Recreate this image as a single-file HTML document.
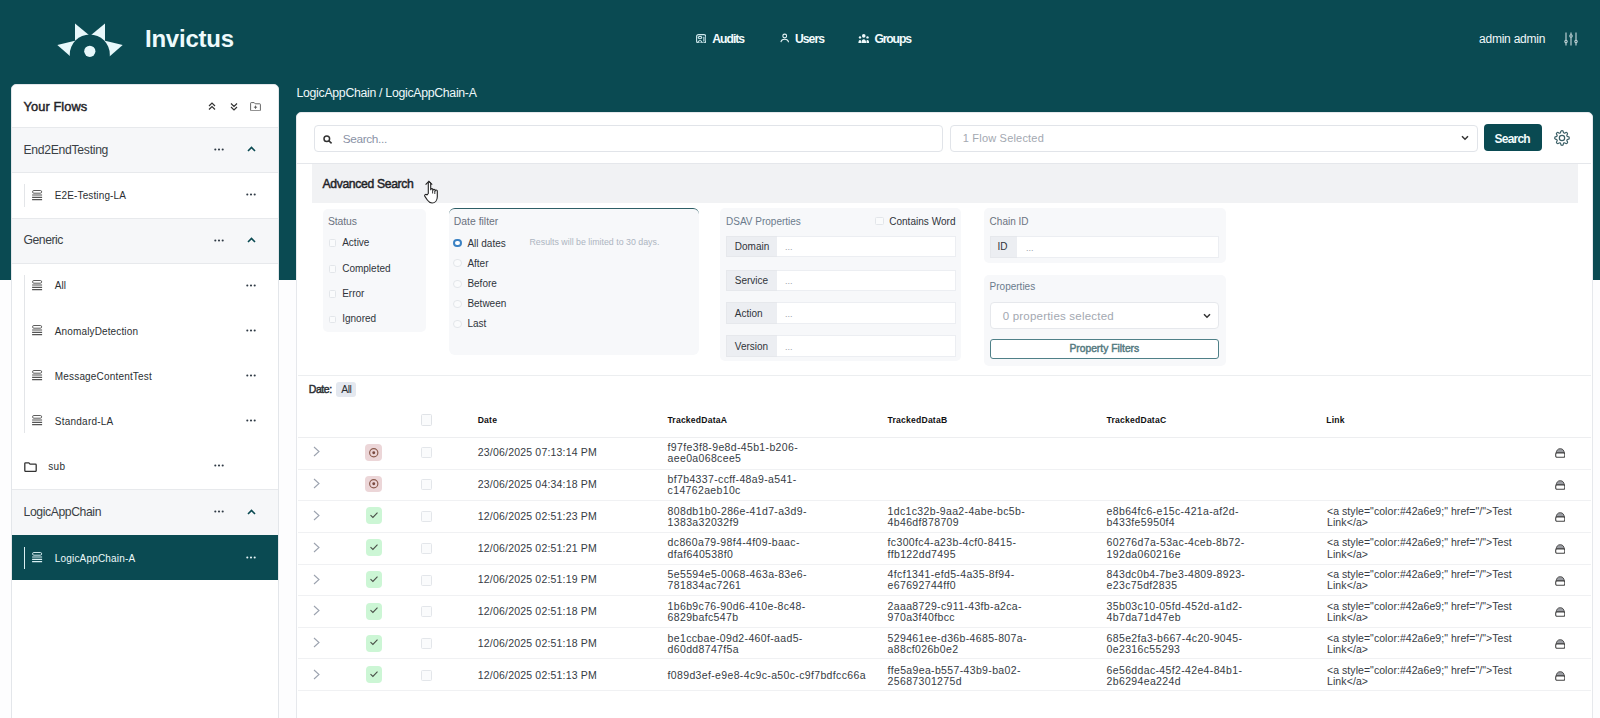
<!DOCTYPE html>
<html><head><meta charset="utf-8"><title>Invictus</title>
<style>
html,body{margin:0;padding:0;}
body{width:1600px;height:718px;overflow:hidden;position:relative;background:#fdfdfe;font-family:"Liberation Sans",sans-serif;}
.t{position:absolute;white-space:nowrap;}
.r{position:absolute;display:block;}
</style></head><body>
<div class="r" style="left:0.00px;top:0.00px;width:1600.00px;height:280.00px;background:#0a4a52;"></div>
<svg class="r" style="left:55.00px;top:22.00px;" width="70" height="36" viewBox="55 22 70 36"><g fill="#e8f8fb"><polygon points="75,23.5 89.5,35.5 75,44"/><polygon points="105,23.5 90.5,35.5 105,44"/><polygon points="57.3,45 76,40.5 70.5,56.5"/><polygon points="122.7,45 104,40.5 109.5,56.5"/></g><circle cx="89.8" cy="54.5" r="20" fill="#0a4a52"/><circle cx="89.8" cy="51.3" r="5.6" fill="#e8f8fb"/></svg>
<div class="t" style="left:145.00px;top:27.00px;font-size:24px;line-height:24px;color:#eefafc;font-weight:700;letter-spacing:-0.242px;">Invictus</div>
<svg class="r" style="left:695.80px;top:33.60px;" width="10.4" height="9.6" viewBox="0 0 10.4 9.6"><g fill="none" stroke="#cfe9ee" stroke-width="1.1"><rect x="0.6" y="0.6" width="9.2" height="8.4" rx="2"/><ellipse cx="4" cy="3.6" rx="1.8" ry="1.2"/><path d="M1.8 8.8c.4-1.5 1.2-2.3 2.2-2.3s1.8.8 2.2 2.3"/><path d="M7.9 2.8v4.6"/></g></svg>
<div class="t" style="left:712.20px;top:33.40px;font-size:12.2px;line-height:12.2px;color:#f2fbfd;font-weight:700;letter-spacing:-0.990px;">Audits</div>
<svg class="r" style="left:779.50px;top:33.00px;" width="9" height="10" viewBox="0 0 9 10"><g fill="none" stroke="#e8f6f8" stroke-width="1.1"><circle cx="4.7" cy="3" r="1.9"/><path d="M0.9 9.2c.3-2 1.6-3 3.8-3s3.5 1 3.8 3"/></g></svg>
<div class="t" style="left:795.00px;top:33.40px;font-size:12.2px;line-height:12.2px;color:#f2fbfd;font-weight:700;letter-spacing:-0.978px;">Users</div>
<svg class="r" style="left:857.50px;top:33.80px;" width="11.5" height="9.5" viewBox="0 0 11.5 9.5"><g fill="#eef9fb"><circle cx="5.75" cy="1.9" r="1.8"/><circle cx="2" cy="3.4" r="1.2"/><circle cx="9.5" cy="3.4" r="1.2"/><path d="M3.3 9.3c0-2.6 1.1-4 2.45-4s2.45 1.4 2.45 4z"/><path d="M0.4 9.3c0-2 .6-3.2 1.5-3.2s1.1.6 1.1 1.2v2z"/><path d="M11.1 9.3c0-2-.6-3.2-1.5-3.2s-1.1.6-1.1 1.2v2z"/></g></svg>
<div class="t" style="left:874.40px;top:33.40px;font-size:12.2px;line-height:12.2px;color:#f2fbfd;font-weight:700;letter-spacing:-1.156px;">Groups</div>
<div class="t" style="left:1479.00px;top:32.50px;font-size:12px;line-height:12px;color:#f0f8fa;letter-spacing:-0.230px;">admin admin</div>
<svg class="r" style="left:1564.00px;top:32.00px;" width="14" height="14" viewBox="0 0 14 14"><g stroke="#c9d9dc" stroke-width="1.1" fill="none"><path d="M2 0.5v13M7 0.5v13M12 0.5v13"/><circle cx="2" cy="9.5" r="1.2" fill="#0a4a52"/><circle cx="7" cy="4" r="1.2" fill="#0a4a52"/><circle cx="12" cy="9.5" r="1.2" fill="#0a4a52"/></g></svg>
<div class="t" style="left:296.50px;top:87.35px;font-size:12.3px;line-height:12.3px;color:#eef8fa;letter-spacing:-0.300px;">LogicAppChain / LogicAppChain-A</div>
<div class="r" style="left:11.00px;top:84.00px;width:268.00px;height:700.00px;background:#fff;border:1px solid #e3e6ea;border-radius:5px;box-sizing:border-box;"></div>
<div class="t" style="left:23.50px;top:100.60px;font-size:12.8px;line-height:12.8px;color:#1f2328;-webkit-text-stroke:0.45px #1f2328;letter-spacing:0.095px;">Your Flows</div>
<svg class="r" style="left:207.50px;top:101.80px;" width="8" height="8" viewBox="0 0 8 8"><g fill="none" stroke="#333" stroke-width="1.2"><path d="M1 4L4 1L7 4M1 7.5L4 4.5L7 7.5"/></g></svg>
<svg class="r" style="left:230.00px;top:102.60px;" width="8" height="8" viewBox="0 0 8 8"><g fill="none" stroke="#333" stroke-width="1.2"><path d="M1 0.5L4 3.5L7 0.5M1 4L4 7L7 4"/></g></svg>
<svg class="r" style="left:250.20px;top:101.80px;" width="11" height="9" viewBox="0 0 11 9"><g fill="none" stroke="#666" stroke-width="1"><path d="M0.6 1.2a.6.6 0 0 1 .6-.6h3l1 1.2h4.6a.6.6 0 0 1 .6.6v5.8a.6.6 0 0 1-.6.6H1.2a.6.6 0 0 1-.6-.6z"/></g><path d="M5.5 3.6v3.2M3.9 5.2h3.2" stroke="#555" stroke-width="0.9"/></svg>
<div class="r" style="left:12.00px;top:127.00px;width:266.00px;height:1.00px;background:#e5e7eb;"></div>
<div class="r" style="left:12.00px;top:127.00px;width:266.00px;height:45.00px;background:#f6f7f9;"></div>
<div class="r" style="left:12.00px;top:127.00px;width:266.00px;height:1.00px;background:#e7e9ec;"></div>
<div class="r" style="left:12.00px;top:172.00px;width:266.00px;height:1.00px;background:#e7e9ec;"></div>
<div class="t" style="left:23.50px;top:144.40px;font-size:12.2px;line-height:12.2px;color:#3a3f45;letter-spacing:-0.297px;">End2EndTesting</div>
<svg class="r" style="left:214.00px;top:147.70px" width="10" height="3" viewBox="0 0 10 3"><g fill="#2f3a45"><circle cx="1.3" cy="1.5" r="1.05"/><circle cx="5" cy="1.5" r="1.05"/><circle cx="8.7" cy="1.5" r="1.05"/></g></svg>
<svg class="r" style="left:246.50px;top:146.10px" width="9" height="6" viewBox="0 0 9 6"><path d="M1 5L4.5 1.5L8 5" fill="none" stroke="#0a4a52" stroke-width="1.6"/></svg>
<svg class="r" style="left:31.80px;top:189.70px" width="11" height="11" viewBox="0 0 11 11"><g fill="none" stroke="#555"><rect x="0.55" y="0.5" width="9.1" height="2.7" rx="1.35" stroke-width="0.95"/><path d="M0.1 5.0h10M0.1 7.4h10M0.1 9.6h10" stroke-width="1.15"/></g></svg>
<div class="t" style="left:54.80px;top:191.00px;font-size:10px;line-height:10px;color:#2b2f33;letter-spacing:0.125px;">E2E-Testing-LA</div>
<svg class="r" style="left:246.00px;top:193.20px" width="10" height="3" viewBox="0 0 10 3"><g fill="#2f3a45"><circle cx="1.3" cy="1.5" r="1.05"/><circle cx="5" cy="1.5" r="1.05"/><circle cx="8.7" cy="1.5" r="1.05"/></g></svg>
<div class="r" style="left:12.00px;top:218.00px;width:266.00px;height:45.00px;background:#f6f7f9;"></div>
<div class="r" style="left:12.00px;top:218.00px;width:266.00px;height:1.00px;background:#e7e9ec;"></div>
<div class="r" style="left:12.00px;top:263.00px;width:266.00px;height:1.00px;background:#e7e9ec;"></div>
<div class="t" style="left:23.50px;top:234.40px;font-size:12.2px;line-height:12.2px;color:#3a3f45;letter-spacing:-0.453px;">Generic</div>
<svg class="r" style="left:214.00px;top:238.70px" width="10" height="3" viewBox="0 0 10 3"><g fill="#2f3a45"><circle cx="1.3" cy="1.5" r="1.05"/><circle cx="5" cy="1.5" r="1.05"/><circle cx="8.7" cy="1.5" r="1.05"/></g></svg>
<svg class="r" style="left:246.50px;top:237.10px" width="9" height="6" viewBox="0 0 9 6"><path d="M1 5L4.5 1.5L8 5" fill="none" stroke="#0a4a52" stroke-width="1.6"/></svg>
<svg class="r" style="left:31.80px;top:280.20px" width="11" height="11" viewBox="0 0 11 11"><g fill="none" stroke="#555"><rect x="0.55" y="0.5" width="9.1" height="2.7" rx="1.35" stroke-width="0.95"/><path d="M0.1 5.0h10M0.1 7.4h10M0.1 9.6h10" stroke-width="1.15"/></g></svg>
<div class="t" style="left:54.80px;top:281.00px;font-size:10px;line-height:10px;color:#2b2f33;">All</div>
<svg class="r" style="left:246.00px;top:283.70px" width="10" height="3" viewBox="0 0 10 3"><g fill="#2f3a45"><circle cx="1.3" cy="1.5" r="1.05"/><circle cx="5" cy="1.5" r="1.05"/><circle cx="8.7" cy="1.5" r="1.05"/></g></svg>
<svg class="r" style="left:31.80px;top:325.20px" width="11" height="11" viewBox="0 0 11 11"><g fill="none" stroke="#555"><rect x="0.55" y="0.5" width="9.1" height="2.7" rx="1.35" stroke-width="0.95"/><path d="M0.1 5.0h10M0.1 7.4h10M0.1 9.6h10" stroke-width="1.15"/></g></svg>
<div class="t" style="left:54.80px;top:327.00px;font-size:10px;line-height:10px;color:#2b2f33;letter-spacing:0.136px;">AnomalyDetection</div>
<svg class="r" style="left:246.00px;top:328.70px" width="10" height="3" viewBox="0 0 10 3"><g fill="#2f3a45"><circle cx="1.3" cy="1.5" r="1.05"/><circle cx="5" cy="1.5" r="1.05"/><circle cx="8.7" cy="1.5" r="1.05"/></g></svg>
<svg class="r" style="left:31.80px;top:370.20px" width="11" height="11" viewBox="0 0 11 11"><g fill="none" stroke="#555"><rect x="0.55" y="0.5" width="9.1" height="2.7" rx="1.35" stroke-width="0.95"/><path d="M0.1 5.0h10M0.1 7.4h10M0.1 9.6h10" stroke-width="1.15"/></g></svg>
<div class="t" style="left:54.80px;top:372.00px;font-size:10px;line-height:10px;color:#2b2f33;letter-spacing:0.174px;">MessageContentTest</div>
<svg class="r" style="left:246.00px;top:373.70px" width="10" height="3" viewBox="0 0 10 3"><g fill="#2f3a45"><circle cx="1.3" cy="1.5" r="1.05"/><circle cx="5" cy="1.5" r="1.05"/><circle cx="8.7" cy="1.5" r="1.05"/></g></svg>
<svg class="r" style="left:31.80px;top:415.20px" width="11" height="11" viewBox="0 0 11 11"><g fill="none" stroke="#555"><rect x="0.55" y="0.5" width="9.1" height="2.7" rx="1.35" stroke-width="0.95"/><path d="M0.1 5.0h10M0.1 7.4h10M0.1 9.6h10" stroke-width="1.15"/></g></svg>
<div class="t" style="left:54.80px;top:417.00px;font-size:10px;line-height:10px;color:#2b2f33;letter-spacing:0.235px;">Standard-LA</div>
<svg class="r" style="left:246.00px;top:418.70px" width="10" height="3" viewBox="0 0 10 3"><g fill="#2f3a45"><circle cx="1.3" cy="1.5" r="1.05"/><circle cx="5" cy="1.5" r="1.05"/><circle cx="8.7" cy="1.5" r="1.05"/></g></svg>
<svg class="r" style="left:23.5px;top:461.80px" width="13" height="10" viewBox="0 0 13 10"><path d="M0.8 1.6a.8.8 0 0 1 .8-.8h3.2l1.3 1.4h5.3a.8.8 0 0 1 .8.8v5.6a.8.8 0 0 1-.8.8H1.6a.8.8 0 0 1-.8-.8z" fill="none" stroke="#333" stroke-width="1.3"/></svg>
<div class="t" style="left:48.30px;top:462.00px;font-size:10px;line-height:10px;color:#2b2f33;letter-spacing:0.288px;">sub</div>
<svg class="r" style="left:214.00px;top:464.20px" width="10" height="3" viewBox="0 0 10 3"><g fill="#2f3a45"><circle cx="1.3" cy="1.5" r="1.05"/><circle cx="5" cy="1.5" r="1.05"/><circle cx="8.7" cy="1.5" r="1.05"/></g></svg>
<div class="r" style="left:12.00px;top:489.00px;width:266.00px;height:46.00px;background:#f6f7f9;"></div>
<div class="r" style="left:12.00px;top:489.00px;width:266.00px;height:1.00px;background:#e7e9ec;"></div>
<div class="r" style="left:12.00px;top:535.00px;width:266.00px;height:1.00px;background:#e7e9ec;"></div>
<div class="t" style="left:23.50px;top:506.40px;font-size:12.2px;line-height:12.2px;color:#3a3f45;letter-spacing:-0.396px;">LogicAppChain</div>
<svg class="r" style="left:214.00px;top:510.20px" width="10" height="3" viewBox="0 0 10 3"><g fill="#2f3a45"><circle cx="1.3" cy="1.5" r="1.05"/><circle cx="5" cy="1.5" r="1.05"/><circle cx="8.7" cy="1.5" r="1.05"/></g></svg>
<svg class="r" style="left:246.50px;top:508.60px" width="9" height="6" viewBox="0 0 9 6"><path d="M1 5L4.5 1.5L8 5" fill="none" stroke="#0a4a52" stroke-width="1.6"/></svg>
<div class="r" style="left:12.00px;top:535.00px;width:266.00px;height:45.00px;background:#0a4a52;"></div>
<div class="r" style="left:24.00px;top:546.50px;width:1.00px;height:22.50px;background:#d9eef1;"></div>
<svg class="r" style="left:31.80px;top:552.20px" width="11" height="11" viewBox="0 0 11 11"><g fill="none" stroke="#d8eef2"><rect x="0.55" y="0.5" width="9.1" height="2.7" rx="1.35" stroke-width="0.95"/><path d="M0.1 5.0h10M0.1 7.4h10M0.1 9.6h10" stroke-width="1.15"/></g></svg>
<div class="t" style="left:54.80px;top:554.00px;font-size:10px;line-height:10px;color:#eefafc;letter-spacing:0.177px;">LogicAppChain-A</div>
<svg class="r" style="left:246.00px;top:555.70px" width="10" height="3" viewBox="0 0 10 3"><g fill="#e6f4f6"><circle cx="1.3" cy="1.5" r="1.05"/><circle cx="5" cy="1.5" r="1.05"/><circle cx="8.7" cy="1.5" r="1.05"/></g></svg>
<div class="r" style="left:24.00px;top:184.00px;width:1.00px;height:23.00px;background:#e3e5e8;"></div>
<div class="r" style="left:24.00px;top:275.00px;width:1.00px;height:158.00px;background:#e3e5e8;"></div>
<div class="r" style="left:296.00px;top:112.00px;width:1297.00px;height:700.00px;background:#fff;border:1px solid #e6e8ec;border-radius:5px;box-sizing:border-box;"></div>
<div class="r" style="left:314.00px;top:124.50px;width:628.50px;height:27.00px;border:1px solid #e1e4e9;border-radius:4px;box-sizing:border-box;"></div>
<svg class="r" style="left:322.50px;top:134.80px;" width="10" height="9" viewBox="0 0 10 9"><g fill="none" stroke="#333" stroke-width="1.5"><circle cx="3.8" cy="3.8" r="2.8"/><path d="M5.9 5.9L8.6 8.4"/></g></svg>
<div class="t" style="left:342.70px;top:133.60px;font-size:11.8px;line-height:11.8px;color:#8a92a6;letter-spacing:-0.328px;">Search...</div>
<div class="r" style="left:949.50px;top:124.50px;width:528.00px;height:27.00px;border:1px solid #e1e4e9;border-radius:4px;box-sizing:border-box;"></div>
<div class="t" style="left:962.80px;top:133.00px;font-size:11px;line-height:11px;color:#a3a8b1;letter-spacing:0.196px;">1 Flow Selected</div>
<svg class="r" style="left:1460.50px;top:134.80px;" width="8" height="6" viewBox="0 0 8 6"><path d="M1 1.2L4 4.2L7 1.2" fill="none" stroke="#333" stroke-width="1.5"/></svg>
<div class="r" style="left:1484.00px;top:124.20px;width:58.00px;height:27.20px;background:#0a4a52;border-radius:4px;"></div>
<div class="t" style="left:1494.60px;top:132.50px;font-size:12px;line-height:12px;color:#f3fbfc;font-weight:700;letter-spacing:-0.805px;">Search</div>
<svg class="r" style="left:1553.50px;top:130.00px;" width="16" height="16" viewBox="0 0 24 24"><path fill="none" stroke="#3b5f66" stroke-width="1.8" d="M12 16a4 4 0 1 0 0-8 4 4 0 0 0 0 8z"/><path fill="none" stroke="#3b5f66" stroke-width="1.8" d="M19.4 15a1.65 1.65 0 0 0 .33 1.82l.06.06a2 2 0 1 1-2.83 2.83l-.06-.06a1.65 1.65 0 0 0-1.82-.33 1.65 1.65 0 0 0-1 1.51V21a2 2 0 1 1-4 0v-.09A1.65 1.65 0 0 0 9 19.4a1.65 1.65 0 0 0-1.82.33l-.06.06a2 2 0 1 1-2.83-2.83l.06-.06A1.65 1.65 0 0 0 4.68 15a1.65 1.65 0 0 0-1.51-1H3a2 2 0 1 1 0-4h.09A1.65 1.65 0 0 0 4.6 9a1.65 1.65 0 0 0-.33-1.82l-.06-.06a2 2 0 1 1 2.83-2.83l.06.06A1.65 1.65 0 0 0 9 4.68a1.65 1.65 0 0 0 1-1.51V3a2 2 0 1 1 4 0v.09a1.65 1.65 0 0 0 1 1.51 1.65 1.65 0 0 0 1.82-.33l.06-.06a2 2 0 1 1 2.83 2.83l-.06.06A1.65 1.65 0 0 0 19.4 9a1.65 1.65 0 0 0 1.51 1H21a2 2 0 1 1 0 4h-.09a1.65 1.65 0 0 0-1.51 1z"/></svg>
<div class="r" style="left:297.00px;top:162.70px;width:1294.00px;height:1.00px;background:#e5e7eb;"></div>
<div class="r" style="left:312.00px;top:164.00px;width:1266.00px;height:38.50px;background:#f1f2f4;"></div>
<div class="t" style="left:322.50px;top:178.40px;font-size:12.2px;line-height:12.2px;color:#1f2328;-webkit-text-stroke:0.45px #1f2328;letter-spacing:-0.351px;">Advanced Search</div>
<svg class="r" style="left:423.00px;top:180.00px;" width="18" height="25" viewBox="423 180 18 25"><path d="M425.6 184.6L428.9 181.3L432.2 184.6" fill="none" stroke="#222" stroke-width="1.1"/>
<path d="M428.3 193.5V183.6c0-.9.5-1.4 1.2-1.4s1.2.5 1.2 1.4v6.2c0-.8.5-1.2 1.1-1.2s1.1.4 1.1 1.2v.6c0-.7.5-1.1 1.1-1.1s1.1.4 1.1 1.1v.6c0-.7.5-1 1.1-1s1.1.4 1.1 1.1v5.6c0 3.6-2.2 6.3-5.2 6.3-2.2 0-3.4-1-4.6-2.7l-2.6-3.9c-.5-.7-.3-1.4.3-1.8.6-.4 1.3-.2 1.8.4z" fill="#fff" stroke="#222" stroke-width="1.1" stroke-linejoin="round"/>
<path d="M432.6 190.5v3M434.8 191v3" stroke="#222" stroke-width="0.9"/></svg>
<div class="r" style="left:323.30px;top:208.80px;width:102.70px;height:123.00px;background:#f7f8fa;border-radius:5px;"></div>
<div class="t" style="left:328.00px;top:216.80px;font-size:10.4px;line-height:10.4px;color:#6b7280;letter-spacing:-0.117px;">Status</div>
<div class="r" style="left:328.50px;top:239.20px;width:7.50px;height:7.50px;border:1px solid #e3e6ea;border-radius:1.5px;box-sizing:border-box;background:#fafbfc;"></div>
<div class="t" style="left:342.20px;top:238.00px;font-size:10px;line-height:10px;color:#2f343a;">Active</div>
<div class="r" style="left:328.50px;top:265.20px;width:7.50px;height:7.50px;border:1px solid #e3e6ea;border-radius:1.5px;box-sizing:border-box;background:#fafbfc;"></div>
<div class="t" style="left:342.20px;top:264.00px;font-size:10px;line-height:10px;color:#2f343a;">Completed</div>
<div class="r" style="left:328.50px;top:290.40px;width:7.50px;height:7.50px;border:1px solid #e3e6ea;border-radius:1.5px;box-sizing:border-box;background:#fafbfc;"></div>
<div class="t" style="left:342.20px;top:289.00px;font-size:10px;line-height:10px;color:#2f343a;">Error</div>
<div class="r" style="left:328.50px;top:315.90px;width:7.50px;height:7.50px;border:1px solid #e3e6ea;border-radius:1.5px;box-sizing:border-box;background:#fafbfc;"></div>
<div class="t" style="left:342.20px;top:314.00px;font-size:10px;line-height:10px;color:#2f343a;">Ignored</div>
<div class="r" style="left:448.50px;top:208.20px;width:250.00px;height:146.60px;background:#f7f8fa;border-radius:6px;border-top:1px solid #2d5e66;box-sizing:border-box;"></div>
<div class="t" style="left:453.80px;top:216.80px;font-size:10.4px;line-height:10.4px;color:#6b7280;">Date filter</div>
<div class="r" style="left:453.40px;top:239.30px;width:8.20px;height:8.20px;border:2.3px solid #3b82c4;border-radius:50%;box-sizing:border-box;background:#fff;"></div>
<div class="t" style="left:467.40px;top:239.00px;font-size:10px;line-height:10px;color:#2f343a;">All dates</div>
<div class="r" style="left:453.40px;top:259.30px;width:8.20px;height:8.20px;border:1px solid #e3e6ea;border-radius:50%;box-sizing:border-box;background:#fafbfc;"></div>
<div class="t" style="left:467.40px;top:259.00px;font-size:10px;line-height:10px;color:#2f343a;">After</div>
<div class="r" style="left:453.40px;top:279.80px;width:8.20px;height:8.20px;border:1px solid #e3e6ea;border-radius:50%;box-sizing:border-box;background:#fafbfc;"></div>
<div class="t" style="left:467.40px;top:279.00px;font-size:10px;line-height:10px;color:#2f343a;">Before</div>
<div class="r" style="left:453.40px;top:299.50px;width:8.20px;height:8.20px;border:1px solid #e3e6ea;border-radius:50%;box-sizing:border-box;background:#fafbfc;"></div>
<div class="t" style="left:467.40px;top:299.00px;font-size:10px;line-height:10px;color:#2f343a;">Between</div>
<div class="r" style="left:453.40px;top:319.50px;width:8.20px;height:8.20px;border:1px solid #e3e6ea;border-radius:50%;box-sizing:border-box;background:#fafbfc;"></div>
<div class="t" style="left:467.40px;top:319.00px;font-size:10px;line-height:10px;color:#2f343a;">Last</div>
<div class="t" style="left:529.50px;top:238.10px;font-size:8.8px;line-height:8.8px;color:#adb5c1;letter-spacing:0.008px;">Results will be limited to 30 days.</div>
<div class="r" style="left:720.00px;top:208.00px;width:241.00px;height:153.00px;background:#f7f8fa;border-radius:5px;"></div>
<div class="t" style="left:726.00px;top:217.00px;font-size:10px;line-height:10px;color:#6b7b8c;">DSAV Properties</div>
<div class="r" style="left:875.20px;top:216.60px;width:8.60px;height:8.60px;border:1px solid #e3e6ea;border-radius:1.5px;box-sizing:border-box;background:#fafbfc;"></div>
<div class="t" style="left:889.20px;top:217.00px;font-size:10px;line-height:10px;color:#2f343a;letter-spacing:0.029px;">Contains Word</div>
<div class="r" style="left:726.00px;top:235.70px;width:229.50px;height:21.70px;border:1px solid #eceef2;box-sizing:border-box;background:#fff;"></div>
<div class="r" style="left:726.00px;top:235.70px;width:50.70px;height:21.70px;background:#eceef2;border:1px solid #e6e8ec;border-right:none;box-sizing:border-box;"></div>
<div class="t" style="left:734.80px;top:242.00px;font-size:10px;line-height:10px;color:#2f343a;">Domain</div>
<div class="t" style="left:785.00px;top:243.00px;font-size:9px;line-height:9px;color:#9aa0a8;">...</div>
<div class="r" style="left:726.00px;top:269.50px;width:229.50px;height:21.70px;border:1px solid #eceef2;box-sizing:border-box;background:#fff;"></div>
<div class="r" style="left:726.00px;top:269.50px;width:50.70px;height:21.70px;background:#eceef2;border:1px solid #e6e8ec;border-right:none;box-sizing:border-box;"></div>
<div class="t" style="left:734.80px;top:276.00px;font-size:10px;line-height:10px;color:#2f343a;">Service</div>
<div class="t" style="left:785.00px;top:277.00px;font-size:9px;line-height:9px;color:#9aa0a8;">...</div>
<div class="r" style="left:726.00px;top:302.30px;width:229.50px;height:21.70px;border:1px solid #eceef2;box-sizing:border-box;background:#fff;"></div>
<div class="r" style="left:726.00px;top:302.30px;width:50.70px;height:21.70px;background:#eceef2;border:1px solid #e6e8ec;border-right:none;box-sizing:border-box;"></div>
<div class="t" style="left:734.80px;top:309.00px;font-size:10px;line-height:10px;color:#2f343a;">Action</div>
<div class="t" style="left:785.00px;top:310.00px;font-size:9px;line-height:9px;color:#9aa0a8;">...</div>
<div class="r" style="left:726.00px;top:335.40px;width:229.50px;height:21.70px;border:1px solid #eceef2;box-sizing:border-box;background:#fff;"></div>
<div class="r" style="left:726.00px;top:335.40px;width:50.70px;height:21.70px;background:#eceef2;border:1px solid #e6e8ec;border-right:none;box-sizing:border-box;"></div>
<div class="t" style="left:734.80px;top:342.00px;font-size:10px;line-height:10px;color:#2f343a;">Version</div>
<div class="t" style="left:785.00px;top:343.00px;font-size:9px;line-height:9px;color:#9aa0a8;">...</div>
<div class="r" style="left:984.20px;top:208.30px;width:241.50px;height:54.40px;background:#f7f8fa;border-radius:5px;"></div>
<div class="t" style="left:989.60px;top:217.00px;font-size:10px;line-height:10px;color:#6b7280;">Chain ID</div>
<div class="r" style="left:989.60px;top:235.50px;width:229.40px;height:22.00px;border:1px solid #eceef2;box-sizing:border-box;background:#fff;"></div>
<div class="r" style="left:989.60px;top:235.50px;width:27.70px;height:22.00px;background:#eceef2;border:1px solid #e6e8ec;border-right:none;box-sizing:border-box;"></div>
<div class="t" style="left:997.50px;top:242.00px;font-size:10px;line-height:10px;color:#2f343a;">ID</div>
<div class="t" style="left:1026.00px;top:244.00px;font-size:9px;line-height:9px;color:#9aa0a8;">...</div>
<div class="r" style="left:984.20px;top:274.60px;width:241.50px;height:91.00px;background:#f7f8fa;border-radius:5px;"></div>
<div class="t" style="left:989.60px;top:282.00px;font-size:10px;line-height:10px;color:#6b7b8c;">Properties</div>
<div class="r" style="left:989.60px;top:302.30px;width:229.40px;height:27.20px;border:1px solid #e6e8ec;border-radius:4px;box-sizing:border-box;background:#fff;"></div>
<div class="t" style="left:1002.70px;top:310.75px;font-size:11.5px;line-height:11.5px;color:#a3a8b1;letter-spacing:0.212px;">0 properties selected</div>
<svg class="r" style="left:1202.50px;top:313.00px;" width="8" height="6" viewBox="0 0 8 6"><path d="M1 1.2L4 4.2L7 1.2" fill="none" stroke="#333" stroke-width="1.5"/></svg>
<div class="r" style="left:989.60px;top:338.50px;width:229.40px;height:20.80px;border:1px solid #4f8088;border-radius:3px;box-sizing:border-box;background:#fff;"></div>
<div class="t" style="left:1069.40px;top:343.85px;font-size:10.3px;line-height:10.3px;color:#557a7f;-webkit-text-stroke:0.45px #557a7f;">Property Filters</div>
<div class="r" style="left:298.00px;top:375.00px;width:1293.00px;height:1.00px;background:#eceef0;"></div>
<div class="t" style="left:308.75px;top:384.25px;font-size:10.5px;line-height:10.5px;color:#2a2e33;-webkit-text-stroke:0.45px #2a2e33;letter-spacing:-0.424px;">Date:</div>
<div class="r" style="left:335.90px;top:381.70px;width:20.50px;height:15.70px;background:#e4e8ef;border-radius:3px;"></div>
<div class="t" style="left:341.20px;top:384.25px;font-size:10.5px;line-height:10.5px;color:#2a2e33;letter-spacing:-0.485px;">All</div>
<div class="r" style="left:421.00px;top:414.40px;width:11.20px;height:11.20px;border:1px solid #e0e3e7;border-radius:1.5px;box-sizing:border-box;background:#fafbfc;"></div>
<div class="t" style="left:477.70px;top:416.20px;font-size:8.6px;line-height:8.6px;color:#111;font-weight:700;letter-spacing:0.2px;">Date</div>
<div class="t" style="left:667.40px;top:416.20px;font-size:8.6px;line-height:8.6px;color:#111;font-weight:700;letter-spacing:0.2px;">TrackedDataA</div>
<div class="t" style="left:887.60px;top:416.20px;font-size:8.6px;line-height:8.6px;color:#111;font-weight:700;letter-spacing:0.2px;">TrackedDataB</div>
<div class="t" style="left:1106.60px;top:416.20px;font-size:8.6px;line-height:8.6px;color:#111;font-weight:700;letter-spacing:0.2px;">TrackedDataC</div>
<div class="t" style="left:1326.30px;top:416.20px;font-size:8.6px;line-height:8.6px;color:#111;font-weight:700;letter-spacing:0.2px;">Link</div>
<div class="r" style="left:298.00px;top:437.00px;width:1293.00px;height:1.00px;background:#edeef0;"></div>
<svg class="r" style="left:312.50px;top:446.30px;" width="7" height="11" viewBox="0 0 7 11"><path d="M1 1L6 5.5L1 10" fill="none" stroke="#9ca3af" stroke-width="1.1"/></svg>
<div class="r" style="left:365.00px;top:444.00px;width:16.50px;height:16.50px;background:#ecd6d8;border-radius:4px;"></div>
<svg class="r" style="left:367.50px;top:446.50px;" width="11.5" height="11.5" viewBox="0 0 12 12"><circle cx="6" cy="6" r="4.3" fill="none" stroke="#8a5a4c" stroke-width="1.2"/><circle cx="6" cy="6" r="1.5" fill="#7a4a3f"/></svg>
<div class="r" style="left:421.00px;top:447.30px;width:11.20px;height:11.20px;border:1px solid #e3e6ea;border-radius:1.5px;box-sizing:border-box;background:#fafbfc;"></div>
<div class="t" style="left:477.80px;top:447.25px;font-size:10.5px;line-height:10.5px;color:#363c44;letter-spacing:0.190px;">23/06/2025 07:13:14 PM</div>
<div class="t" style="left:667.60px;top:442.25px;font-size:10.5px;line-height:10.5px;color:#363c44;letter-spacing:0.35px;">f97fe3f8-9e8d-45b1-b206-</div>
<div class="t" style="left:667.60px;top:453.25px;font-size:10.5px;line-height:10.5px;color:#363c44;letter-spacing:0.35px;">aee0a068cee5</div>
<svg class="r" style="left:1554.80px;top:448.30px;" width="10.5" height="10" viewBox="0 0 10.5 10"><path d="M1.1 5.2C1.5 2.2 2.8 0.7 5.25 0.7S9 2.2 9.4 5.2z" fill="#9a9ca2" stroke="#444" stroke-width="0.9" stroke-linejoin="round"/><rect x="0.7" y="4.9" width="9.1" height="4.4" rx="1.2" fill="#fff" stroke="#444" stroke-width="1.1"/></svg>
<div class="r" style="left:298.00px;top:468.88px;width:1293.00px;height:1.00px;background:#f0f1f3;"></div>
<svg class="r" style="left:312.50px;top:478.10px;" width="7" height="11" viewBox="0 0 7 11"><path d="M1 1L6 5.5L1 10" fill="none" stroke="#9ca3af" stroke-width="1.1"/></svg>
<div class="r" style="left:365.00px;top:475.80px;width:16.50px;height:16.50px;background:#ecd6d8;border-radius:4px;"></div>
<svg class="r" style="left:367.50px;top:478.30px;" width="11.5" height="11.5" viewBox="0 0 12 12"><circle cx="6" cy="6" r="4.3" fill="none" stroke="#8a5a4c" stroke-width="1.2"/><circle cx="6" cy="6" r="1.5" fill="#7a4a3f"/></svg>
<div class="r" style="left:421.00px;top:479.10px;width:11.20px;height:11.20px;border:1px solid #e3e6ea;border-radius:1.5px;box-sizing:border-box;background:#fafbfc;"></div>
<div class="t" style="left:477.80px;top:479.25px;font-size:10.5px;line-height:10.5px;color:#363c44;letter-spacing:0.190px;">23/06/2025 04:34:18 PM</div>
<div class="t" style="left:667.60px;top:474.25px;font-size:10.5px;line-height:10.5px;color:#363c44;letter-spacing:0.35px;">bf7b4337-ccff-48a9-a541-</div>
<div class="t" style="left:667.60px;top:485.25px;font-size:10.5px;line-height:10.5px;color:#363c44;letter-spacing:0.35px;">c14762aeb10c</div>
<svg class="r" style="left:1554.80px;top:480.10px;" width="10.5" height="10" viewBox="0 0 10.5 10"><path d="M1.1 5.2C1.5 2.2 2.8 0.7 5.25 0.7S9 2.2 9.4 5.2z" fill="#9a9ca2" stroke="#444" stroke-width="0.9" stroke-linejoin="round"/><rect x="0.7" y="4.9" width="9.1" height="4.4" rx="1.2" fill="#fff" stroke="#444" stroke-width="1.1"/></svg>
<div class="r" style="left:298.00px;top:500.45px;width:1293.00px;height:1.00px;background:#f0f1f3;"></div>
<svg class="r" style="left:312.50px;top:509.90px;" width="7" height="11" viewBox="0 0 7 11"><path d="M1 1L6 5.5L1 10" fill="none" stroke="#9ca3af" stroke-width="1.1"/></svg>
<div class="r" style="left:365.50px;top:507.30px;width:16.70px;height:17.00px;background:#ccf6d5;border-radius:4px;"></div>
<svg class="r" style="left:369.00px;top:510.90px;" width="10" height="8" viewBox="0 0 10 8"><path d="M1.5 4.2L3.9 6.4L8.5 1.6" fill="none" stroke="#4a4f48" stroke-width="1.1"/></svg>
<div class="r" style="left:421.00px;top:510.90px;width:11.20px;height:11.20px;border:1px solid #e3e6ea;border-radius:1.5px;box-sizing:border-box;background:#fafbfc;"></div>
<div class="t" style="left:477.80px;top:511.25px;font-size:10.5px;line-height:10.5px;color:#363c44;letter-spacing:0.190px;">12/06/2025 02:51:23 PM</div>
<div class="t" style="left:667.60px;top:506.25px;font-size:10.5px;line-height:10.5px;color:#363c44;letter-spacing:0.35px;">808db1b0-286e-41d7-a3d9-</div>
<div class="t" style="left:667.60px;top:517.25px;font-size:10.5px;line-height:10.5px;color:#363c44;letter-spacing:0.35px;">1383a32032f9</div>
<div class="t" style="left:887.60px;top:506.25px;font-size:10.5px;line-height:10.5px;color:#363c44;letter-spacing:0.35px;">1dc1c32b-9aa2-4abe-bc5b-</div>
<div class="t" style="left:887.60px;top:517.25px;font-size:10.5px;line-height:10.5px;color:#363c44;letter-spacing:0.35px;">4b46df878709</div>
<div class="t" style="left:1106.60px;top:506.25px;font-size:10.5px;line-height:10.5px;color:#363c44;letter-spacing:0.35px;">e8b64fc6-e15c-421a-af2d-</div>
<div class="t" style="left:1106.60px;top:517.25px;font-size:10.5px;line-height:10.5px;color:#363c44;letter-spacing:0.35px;">b433fe5950f4</div>
<div class="t" style="left:1327.00px;top:506.25px;font-size:10.5px;line-height:10.5px;color:#363c44;letter-spacing:0.057px;">&lt;a style=&quot;color:#42a6e9;&quot; href=&quot;/&quot;&gt;Test</div>
<div class="t" style="left:1327.00px;top:517.25px;font-size:10.5px;line-height:10.5px;color:#363c44;letter-spacing:0.1px;">Link&lt;/a&gt;</div>
<svg class="r" style="left:1554.80px;top:511.90px;" width="10.5" height="10" viewBox="0 0 10.5 10"><path d="M1.1 5.2C1.5 2.2 2.8 0.7 5.25 0.7S9 2.2 9.4 5.2z" fill="#9a9ca2" stroke="#444" stroke-width="0.9" stroke-linejoin="round"/><rect x="0.7" y="4.9" width="9.1" height="4.4" rx="1.2" fill="#fff" stroke="#444" stroke-width="1.1"/></svg>
<div class="r" style="left:298.00px;top:532.03px;width:1293.00px;height:1.00px;background:#f0f1f3;"></div>
<svg class="r" style="left:312.50px;top:541.70px;" width="7" height="11" viewBox="0 0 7 11"><path d="M1 1L6 5.5L1 10" fill="none" stroke="#9ca3af" stroke-width="1.1"/></svg>
<div class="r" style="left:365.50px;top:539.10px;width:16.70px;height:17.00px;background:#ccf6d5;border-radius:4px;"></div>
<svg class="r" style="left:369.00px;top:542.70px;" width="10" height="8" viewBox="0 0 10 8"><path d="M1.5 4.2L3.9 6.4L8.5 1.6" fill="none" stroke="#4a4f48" stroke-width="1.1"/></svg>
<div class="r" style="left:421.00px;top:542.70px;width:11.20px;height:11.20px;border:1px solid #e3e6ea;border-radius:1.5px;box-sizing:border-box;background:#fafbfc;"></div>
<div class="t" style="left:477.80px;top:543.25px;font-size:10.5px;line-height:10.5px;color:#363c44;letter-spacing:0.190px;">12/06/2025 02:51:21 PM</div>
<div class="t" style="left:667.60px;top:537.25px;font-size:10.5px;line-height:10.5px;color:#363c44;letter-spacing:0.35px;">dc860a79-98f4-4f09-baac-</div>
<div class="t" style="left:667.60px;top:549.25px;font-size:10.5px;line-height:10.5px;color:#363c44;letter-spacing:0.35px;">dfaf640538f0</div>
<div class="t" style="left:887.60px;top:537.25px;font-size:10.5px;line-height:10.5px;color:#363c44;letter-spacing:0.35px;">fc300fc4-a23b-4cf0-8415-</div>
<div class="t" style="left:887.60px;top:549.25px;font-size:10.5px;line-height:10.5px;color:#363c44;letter-spacing:0.35px;">ffb122dd7495</div>
<div class="t" style="left:1106.60px;top:537.25px;font-size:10.5px;line-height:10.5px;color:#363c44;letter-spacing:0.35px;">60276d7a-53ac-4ceb-8b72-</div>
<div class="t" style="left:1106.60px;top:549.25px;font-size:10.5px;line-height:10.5px;color:#363c44;letter-spacing:0.35px;">192da060216e</div>
<div class="t" style="left:1327.00px;top:537.25px;font-size:10.5px;line-height:10.5px;color:#363c44;letter-spacing:0.057px;">&lt;a style=&quot;color:#42a6e9;&quot; href=&quot;/&quot;&gt;Test</div>
<div class="t" style="left:1327.00px;top:549.25px;font-size:10.5px;line-height:10.5px;color:#363c44;letter-spacing:0.1px;">Link&lt;/a&gt;</div>
<svg class="r" style="left:1554.80px;top:543.70px;" width="10.5" height="10" viewBox="0 0 10.5 10"><path d="M1.1 5.2C1.5 2.2 2.8 0.7 5.25 0.7S9 2.2 9.4 5.2z" fill="#9a9ca2" stroke="#444" stroke-width="0.9" stroke-linejoin="round"/><rect x="0.7" y="4.9" width="9.1" height="4.4" rx="1.2" fill="#fff" stroke="#444" stroke-width="1.1"/></svg>
<div class="r" style="left:298.00px;top:563.60px;width:1293.00px;height:1.00px;background:#f0f1f3;"></div>
<svg class="r" style="left:312.50px;top:573.50px;" width="7" height="11" viewBox="0 0 7 11"><path d="M1 1L6 5.5L1 10" fill="none" stroke="#9ca3af" stroke-width="1.1"/></svg>
<div class="r" style="left:365.50px;top:570.90px;width:16.70px;height:17.00px;background:#ccf6d5;border-radius:4px;"></div>
<svg class="r" style="left:369.00px;top:574.50px;" width="10" height="8" viewBox="0 0 10 8"><path d="M1.5 4.2L3.9 6.4L8.5 1.6" fill="none" stroke="#4a4f48" stroke-width="1.1"/></svg>
<div class="r" style="left:421.00px;top:574.50px;width:11.20px;height:11.20px;border:1px solid #e3e6ea;border-radius:1.5px;box-sizing:border-box;background:#fafbfc;"></div>
<div class="t" style="left:477.80px;top:574.25px;font-size:10.5px;line-height:10.5px;color:#363c44;letter-spacing:0.190px;">12/06/2025 02:51:19 PM</div>
<div class="t" style="left:667.60px;top:569.25px;font-size:10.5px;line-height:10.5px;color:#363c44;letter-spacing:0.35px;">5e5594e5-0068-463a-83e6-</div>
<div class="t" style="left:667.60px;top:580.25px;font-size:10.5px;line-height:10.5px;color:#363c44;letter-spacing:0.35px;">781834ac7261</div>
<div class="t" style="left:887.60px;top:569.25px;font-size:10.5px;line-height:10.5px;color:#363c44;letter-spacing:0.35px;">4fcf1341-efd5-4a35-8f94-</div>
<div class="t" style="left:887.60px;top:580.25px;font-size:10.5px;line-height:10.5px;color:#363c44;letter-spacing:0.35px;">e67692744ff0</div>
<div class="t" style="left:1106.60px;top:569.25px;font-size:10.5px;line-height:10.5px;color:#363c44;letter-spacing:0.35px;">843dc0b4-7be3-4809-8923-</div>
<div class="t" style="left:1106.60px;top:580.25px;font-size:10.5px;line-height:10.5px;color:#363c44;letter-spacing:0.35px;">e23c75df2835</div>
<div class="t" style="left:1327.00px;top:569.25px;font-size:10.5px;line-height:10.5px;color:#363c44;letter-spacing:0.057px;">&lt;a style=&quot;color:#42a6e9;&quot; href=&quot;/&quot;&gt;Test</div>
<div class="t" style="left:1327.00px;top:580.25px;font-size:10.5px;line-height:10.5px;color:#363c44;letter-spacing:0.1px;">Link&lt;/a&gt;</div>
<svg class="r" style="left:1554.80px;top:575.50px;" width="10.5" height="10" viewBox="0 0 10.5 10"><path d="M1.1 5.2C1.5 2.2 2.8 0.7 5.25 0.7S9 2.2 9.4 5.2z" fill="#9a9ca2" stroke="#444" stroke-width="0.9" stroke-linejoin="round"/><rect x="0.7" y="4.9" width="9.1" height="4.4" rx="1.2" fill="#fff" stroke="#444" stroke-width="1.1"/></svg>
<div class="r" style="left:298.00px;top:595.18px;width:1293.00px;height:1.00px;background:#f0f1f3;"></div>
<svg class="r" style="left:312.50px;top:605.30px;" width="7" height="11" viewBox="0 0 7 11"><path d="M1 1L6 5.5L1 10" fill="none" stroke="#9ca3af" stroke-width="1.1"/></svg>
<div class="r" style="left:365.50px;top:602.70px;width:16.70px;height:17.00px;background:#ccf6d5;border-radius:4px;"></div>
<svg class="r" style="left:369.00px;top:606.30px;" width="10" height="8" viewBox="0 0 10 8"><path d="M1.5 4.2L3.9 6.4L8.5 1.6" fill="none" stroke="#4a4f48" stroke-width="1.1"/></svg>
<div class="r" style="left:421.00px;top:606.30px;width:11.20px;height:11.20px;border:1px solid #e3e6ea;border-radius:1.5px;box-sizing:border-box;background:#fafbfc;"></div>
<div class="t" style="left:477.80px;top:606.25px;font-size:10.5px;line-height:10.5px;color:#363c44;letter-spacing:0.190px;">12/06/2025 02:51:18 PM</div>
<div class="t" style="left:667.60px;top:601.25px;font-size:10.5px;line-height:10.5px;color:#363c44;letter-spacing:0.35px;">1b6b9c76-90d6-410e-8c48-</div>
<div class="t" style="left:667.60px;top:612.25px;font-size:10.5px;line-height:10.5px;color:#363c44;letter-spacing:0.35px;">6829bafc547b</div>
<div class="t" style="left:887.60px;top:601.25px;font-size:10.5px;line-height:10.5px;color:#363c44;letter-spacing:0.35px;">2aaa8729-c911-43fb-a2ca-</div>
<div class="t" style="left:887.60px;top:612.25px;font-size:10.5px;line-height:10.5px;color:#363c44;letter-spacing:0.35px;">970a3f40fbcc</div>
<div class="t" style="left:1106.60px;top:601.25px;font-size:10.5px;line-height:10.5px;color:#363c44;letter-spacing:0.35px;">35b03c10-05fd-452d-a1d2-</div>
<div class="t" style="left:1106.60px;top:612.25px;font-size:10.5px;line-height:10.5px;color:#363c44;letter-spacing:0.35px;">4b7da71d47eb</div>
<div class="t" style="left:1327.00px;top:601.25px;font-size:10.5px;line-height:10.5px;color:#363c44;letter-spacing:0.057px;">&lt;a style=&quot;color:#42a6e9;&quot; href=&quot;/&quot;&gt;Test</div>
<div class="t" style="left:1327.00px;top:612.25px;font-size:10.5px;line-height:10.5px;color:#363c44;letter-spacing:0.1px;">Link&lt;/a&gt;</div>
<svg class="r" style="left:1554.80px;top:607.30px;" width="10.5" height="10" viewBox="0 0 10.5 10"><path d="M1.1 5.2C1.5 2.2 2.8 0.7 5.25 0.7S9 2.2 9.4 5.2z" fill="#9a9ca2" stroke="#444" stroke-width="0.9" stroke-linejoin="round"/><rect x="0.7" y="4.9" width="9.1" height="4.4" rx="1.2" fill="#fff" stroke="#444" stroke-width="1.1"/></svg>
<div class="r" style="left:298.00px;top:626.75px;width:1293.00px;height:1.00px;background:#f0f1f3;"></div>
<svg class="r" style="left:312.50px;top:637.10px;" width="7" height="11" viewBox="0 0 7 11"><path d="M1 1L6 5.5L1 10" fill="none" stroke="#9ca3af" stroke-width="1.1"/></svg>
<div class="r" style="left:365.50px;top:634.50px;width:16.70px;height:17.00px;background:#ccf6d5;border-radius:4px;"></div>
<svg class="r" style="left:369.00px;top:638.10px;" width="10" height="8" viewBox="0 0 10 8"><path d="M1.5 4.2L3.9 6.4L8.5 1.6" fill="none" stroke="#4a4f48" stroke-width="1.1"/></svg>
<div class="r" style="left:421.00px;top:638.10px;width:11.20px;height:11.20px;border:1px solid #e3e6ea;border-radius:1.5px;box-sizing:border-box;background:#fafbfc;"></div>
<div class="t" style="left:477.80px;top:638.25px;font-size:10.5px;line-height:10.5px;color:#363c44;letter-spacing:0.190px;">12/06/2025 02:51:18 PM</div>
<div class="t" style="left:667.60px;top:633.25px;font-size:10.5px;line-height:10.5px;color:#363c44;letter-spacing:0.35px;">be1ccbae-09d2-460f-aad5-</div>
<div class="t" style="left:667.60px;top:644.25px;font-size:10.5px;line-height:10.5px;color:#363c44;letter-spacing:0.35px;">d60dd8747f5a</div>
<div class="t" style="left:887.60px;top:633.25px;font-size:10.5px;line-height:10.5px;color:#363c44;letter-spacing:0.35px;">529461ee-d36b-4685-807a-</div>
<div class="t" style="left:887.60px;top:644.25px;font-size:10.5px;line-height:10.5px;color:#363c44;letter-spacing:0.35px;">a88cf026b0e2</div>
<div class="t" style="left:1106.60px;top:633.25px;font-size:10.5px;line-height:10.5px;color:#363c44;letter-spacing:0.35px;">685e2fa3-b667-4c20-9045-</div>
<div class="t" style="left:1106.60px;top:644.25px;font-size:10.5px;line-height:10.5px;color:#363c44;letter-spacing:0.35px;">0e2316c55293</div>
<div class="t" style="left:1327.00px;top:633.25px;font-size:10.5px;line-height:10.5px;color:#363c44;letter-spacing:0.057px;">&lt;a style=&quot;color:#42a6e9;&quot; href=&quot;/&quot;&gt;Test</div>
<div class="t" style="left:1327.00px;top:644.25px;font-size:10.5px;line-height:10.5px;color:#363c44;letter-spacing:0.1px;">Link&lt;/a&gt;</div>
<svg class="r" style="left:1554.80px;top:639.10px;" width="10.5" height="10" viewBox="0 0 10.5 10"><path d="M1.1 5.2C1.5 2.2 2.8 0.7 5.25 0.7S9 2.2 9.4 5.2z" fill="#9a9ca2" stroke="#444" stroke-width="0.9" stroke-linejoin="round"/><rect x="0.7" y="4.9" width="9.1" height="4.4" rx="1.2" fill="#fff" stroke="#444" stroke-width="1.1"/></svg>
<div class="r" style="left:298.00px;top:658.33px;width:1293.00px;height:1.00px;background:#f0f1f3;"></div>
<svg class="r" style="left:312.50px;top:668.90px;" width="7" height="11" viewBox="0 0 7 11"><path d="M1 1L6 5.5L1 10" fill="none" stroke="#9ca3af" stroke-width="1.1"/></svg>
<div class="r" style="left:365.50px;top:666.30px;width:16.70px;height:17.00px;background:#ccf6d5;border-radius:4px;"></div>
<svg class="r" style="left:369.00px;top:669.90px;" width="10" height="8" viewBox="0 0 10 8"><path d="M1.5 4.2L3.9 6.4L8.5 1.6" fill="none" stroke="#4a4f48" stroke-width="1.1"/></svg>
<div class="r" style="left:421.00px;top:669.90px;width:11.20px;height:11.20px;border:1px solid #e3e6ea;border-radius:1.5px;box-sizing:border-box;background:#fafbfc;"></div>
<div class="t" style="left:477.80px;top:670.25px;font-size:10.5px;line-height:10.5px;color:#363c44;letter-spacing:0.190px;">12/06/2025 02:51:13 PM</div>
<div class="t" style="left:667.60px;top:670.25px;font-size:10.5px;line-height:10.5px;color:#363c44;letter-spacing:0.35px;">f089d3ef-e9e8-4c9c-a50c-c9f7bdfcc66a</div>
<div class="t" style="left:887.60px;top:665.25px;font-size:10.5px;line-height:10.5px;color:#363c44;letter-spacing:0.35px;">ffe5a9ea-b557-43b9-ba02-</div>
<div class="t" style="left:887.60px;top:676.25px;font-size:10.5px;line-height:10.5px;color:#363c44;letter-spacing:0.35px;">25687301275d</div>
<div class="t" style="left:1106.60px;top:665.25px;font-size:10.5px;line-height:10.5px;color:#363c44;letter-spacing:0.35px;">6e56ddac-45f2-42e4-84b1-</div>
<div class="t" style="left:1106.60px;top:676.25px;font-size:10.5px;line-height:10.5px;color:#363c44;letter-spacing:0.35px;">2b6294ea224d</div>
<div class="t" style="left:1327.00px;top:665.25px;font-size:10.5px;line-height:10.5px;color:#363c44;letter-spacing:0.057px;">&lt;a style=&quot;color:#42a6e9;&quot; href=&quot;/&quot;&gt;Test</div>
<div class="t" style="left:1327.00px;top:676.25px;font-size:10.5px;line-height:10.5px;color:#363c44;letter-spacing:0.1px;">Link&lt;/a&gt;</div>
<svg class="r" style="left:1554.80px;top:670.90px;" width="10.5" height="10" viewBox="0 0 10.5 10"><path d="M1.1 5.2C1.5 2.2 2.8 0.7 5.25 0.7S9 2.2 9.4 5.2z" fill="#9a9ca2" stroke="#444" stroke-width="0.9" stroke-linejoin="round"/><rect x="0.7" y="4.9" width="9.1" height="4.4" rx="1.2" fill="#fff" stroke="#444" stroke-width="1.1"/></svg>
<div class="r" style="left:298.00px;top:689.90px;width:1293.00px;height:1.00px;background:#f0f1f3;"></div>
</body></html>
